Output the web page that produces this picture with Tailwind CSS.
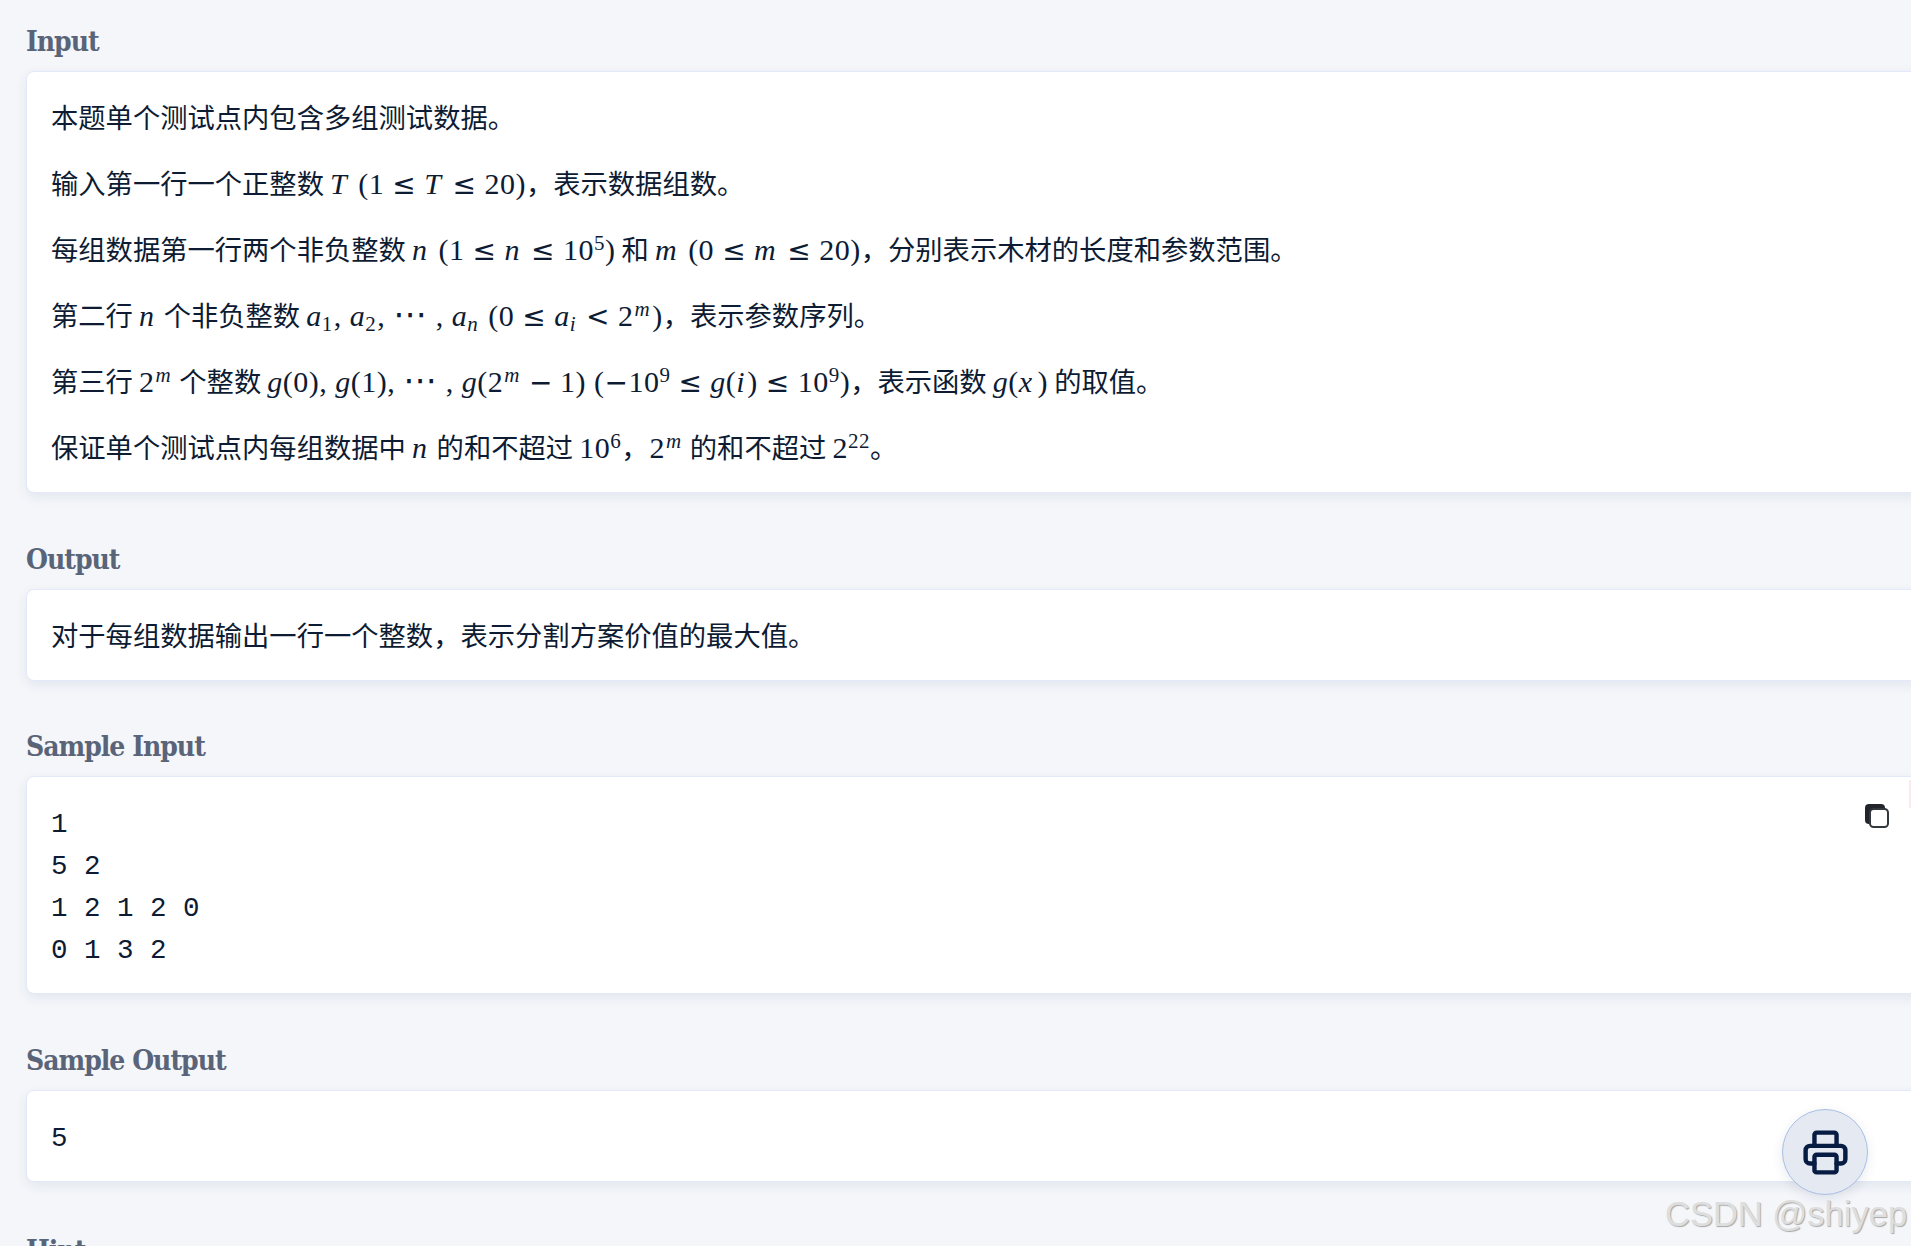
<!DOCTYPE html>
<html lang="zh"><head><meta charset="utf-8"><script src="https://cdn.jsdelivr.net/npm/@tailwindcss/browser@4"></script></head>
<body class="bg-[#f4f6fa] overflow-hidden h-[1246px] relative">
<main class="pl-[26px] pt-[19px] w-[1960px] text-[#0d1b33] text-[27.3px] leading-[42px] font-['Noto_Sans_CJK_SC',sans-serif] [&_span]:leading-none [&_sup]:text-[21px] [&_sub]:text-[21px]">
<section>
<h2 class="h-[40px] leading-[45px] mb-[12px] text-[#5a6478] font-bold text-[28px] tracking-[-1px] font-['DejaVu_Serif_Condensed','Liberation_Serif',serif]">Input</h2>
<div class="bg-white rounded-lg border border-[#e2e9f8] shadow-[0_4px_12px_rgba(30,50,90,0.08)] px-[24px] pt-[23px] pb-[25px] flex flex-col gap-[24px]">
<p class="h-[42px] whitespace-nowrap">本题单个测试点内包含多组测试数据。</p>
<p class="h-[42px] whitespace-nowrap">输入第一行一个正整数 <span class="font-['Liberation_Serif'] text-[30px] tracking-[0.5px]"><i class="pr-[3px]">T</i> (1<span class="mx-[8px] font-['DejaVu_Sans'] text-[28px]">≤</span><i class="pr-[3px]">T</i><span class="mx-[8px] font-['DejaVu_Sans'] text-[28px]">≤</span>20)</span>，表示数据组数。</p>
<p class="h-[42px] whitespace-nowrap">每组数据第一行两个非负整数 <span class="font-['Liberation_Serif'] text-[30px] tracking-[0.5px]"><i class="pr-[3px]">n</i> (1<span class="mx-[8px] font-['DejaVu_Sans'] text-[28px]">≤</span><i class="pr-[3px]">n</i><span class="mx-[8px] font-['DejaVu_Sans'] text-[28px]">≤</span>10<sup>5</sup>)</span> 和 <span class="font-['Liberation_Serif'] text-[30px] tracking-[0.5px]"><i class="pr-[3px]">m</i> (0<span class="mx-[8px] font-['DejaVu_Sans'] text-[28px]">≤</span><i class="pr-[3px]">m</i><span class="mx-[8px] font-['DejaVu_Sans'] text-[28px]">≤</span>20)</span>，分别表示木材的长度和参数范围。</p>
<p class="h-[42px] whitespace-nowrap">第二行 <span class="font-['Liberation_Serif'] text-[30px] tracking-[0.5px]"><i class="pr-[3px]">n</i></span> 个非负整数 <span class="font-['Liberation_Serif'] text-[30px] tracking-[0.5px]"><i>a</i><sub class="pr-[1px]">1</sub>, <i>a</i><sub class="pr-[1px]">2</sub>, <span class="font-['DejaVu_Sans'] text-[34px]">⋯</span> , <i>a</i><sub class="pr-[2px]"><i>n</i></sub> (0<span class="mx-[8px] font-['DejaVu_Sans'] text-[28px]">≤</span><i>a</i><sub class="pr-[2px]"><i>i</i></sub><span class="mx-[8px] font-['DejaVu_Sans'] text-[28px]">&lt;</span>2<sup class="pl-[1px] pr-[2px]"><i>m</i></sup>)</span>，表示参数序列。</p>
<p class="h-[42px] whitespace-nowrap">第三行 <span class="font-['Liberation_Serif'] text-[30px] tracking-[0.5px]">2<sup class="pl-[1px] pr-[2px]"><i>m</i></sup></span> 个整数 <span class="font-['Liberation_Serif'] text-[30px] tracking-[0.5px]"><i>g</i>(0), <i>g</i>(1), <span class="font-['DejaVu_Sans'] text-[34px]">⋯</span> , <i>g</i>(2<sup class="pl-[1px] pr-[2px]"><i>m</i></sup><span class="mx-[7px] font-['DejaVu_Sans'] text-[28px]">−</span>1) (<span class="font-['DejaVu_Sans'] text-[28px]">−</span>10<sup>9</sup><span class="mx-[8px] font-['DejaVu_Sans'] text-[28px]">≤</span><i>g</i>(<i class="pr-[2px]">i</i>)<span class="mx-[8px] font-['DejaVu_Sans'] text-[28px]">≤</span>10<sup>9</sup>)</span>，表示函数 <span class="font-['Liberation_Serif'] text-[30px] tracking-[0.5px]"><i>g</i>(<i class="pr-[5px]">x</i>)</span> 的取值。</p>
<p class="h-[42px] whitespace-nowrap">保证单个测试点内每组数据中 <span class="font-['Liberation_Serif'] text-[30px] tracking-[0.5px]"><i class="pr-[3px]">n</i></span> 的和不超过 <span class="font-['Liberation_Serif'] text-[30px] tracking-[0.5px]">10<sup>6</sup></span>，<span class="ml-[1px] font-['Liberation_Serif'] text-[30px] tracking-[0.5px]">2<sup class="pl-[1px] pr-[2px]"><i>m</i></sup></span> 的和不超过 <span class="font-['Liberation_Serif'] text-[30px] tracking-[0.5px]">2<sup>22</sup></span>。</p>
</div>
</section>
<section class="mt-[44px]">
<h2 class="h-[40px] leading-[45px] mb-[12px] text-[#5a6478] font-bold text-[28px] tracking-[-1px] font-['DejaVu_Serif_Condensed','Liberation_Serif',serif]">Output</h2>
<div class="bg-white rounded-lg border border-[#e2e9f8] shadow-[0_4px_12px_rgba(30,50,90,0.08)] px-[24px] pt-[23px] pb-[25px]">
<p class="h-[42px] whitespace-nowrap">对于每组数据输出一行一个整数，表示分割方案价值的最大值。</p>
</div>
</section>
<section class="mt-[43px]">
<h2 class="h-[40px] leading-[45px] mb-[12px] text-[#5a6478] font-bold text-[28px] tracking-[-1px] font-['DejaVu_Serif_Condensed','Liberation_Serif',serif]">Sample Input</h2>
<div class="relative bg-white rounded-lg border border-[#e2e9f8] shadow-[0_4px_12px_rgba(30,50,90,0.08)] px-[24px] pt-[27px] pb-[21px]">
<pre class="font-['Liberation_Mono',monospace] text-[27.5px] leading-[42px]">1
5 2
1 2 1 2 0
0 1 3 2</pre>
<svg class="absolute left-[1838px] top-[27px]" width="24" height="24" viewBox="0 0 24 24" aria-hidden="true">
<rect x="0" y="0" width="20" height="20" rx="4" fill="#212529"/>
<rect x="5" y="5" width="18" height="18" rx="3.5" fill="#fff" stroke="#33383d" stroke-width="2"/>
</svg>
</div>
</section>
<section class="mt-[44px]">
<h2 class="h-[40px] leading-[45px] mb-[12px] text-[#5a6478] font-bold text-[28px] tracking-[-1px] font-['DejaVu_Serif_Condensed','Liberation_Serif',serif]">Sample Output</h2>
<div class="bg-white rounded-lg border border-[#e2e9f8] shadow-[0_4px_12px_rgba(30,50,90,0.08)] px-[24px] pt-[27px] pb-[21px]">
<pre class="font-['Liberation_Mono',monospace] text-[27.5px] leading-[42px]">5</pre>
</div>
</section>
<section class="mt-[46px]">
<h2 class="h-[40px] leading-[45px] text-[#5a6478] font-bold text-[28px] tracking-[-1px] font-['DejaVu_Serif_Condensed','Liberation_Serif',serif]">Hint</h2>
</section>
</main>
<div class="absolute left-[1909px] top-[780px] w-[2px] h-[28px] bg-[#fbe9ee]"></div>
<button class="absolute left-[1782px] top-[1109px] w-[86px] h-[86px] rounded-full bg-[#e4e9f2] border border-[#a9bfe6] shadow-[0_4px_12px_rgba(30,50,90,0.1)] flex items-center justify-center" aria-label="Print">
<svg width="53" height="53" viewBox="0 0 24 24" fill="none" stroke="#061c42" stroke-width="2" stroke-linecap="round" stroke-linejoin="round" aria-hidden="true">
<path d="M17 17h2a2 2 0 0 0 2 -2v-4a2 2 0 0 0 -2 -2h-14a2 2 0 0 0 -2 2v4a2 2 0 0 0 2 2h2"/>
<path d="M17 9v-5a1 1 0 0 0 -1 -1h-8a1 1 0 0 0 -1 1v5"/>
<rect x="7" y="13" width="10" height="8" rx="1"/>
</svg>
</button>
<div class="absolute left-[1665px] top-[1192px] whitespace-nowrap font-['Liberation_Sans',sans-serif] text-[34.5px] leading-[44px] text-[#dedede] [text-shadow:1px_1px_1px_#a8a8a8]">CSDN @shiyep</div>
</body></html>
